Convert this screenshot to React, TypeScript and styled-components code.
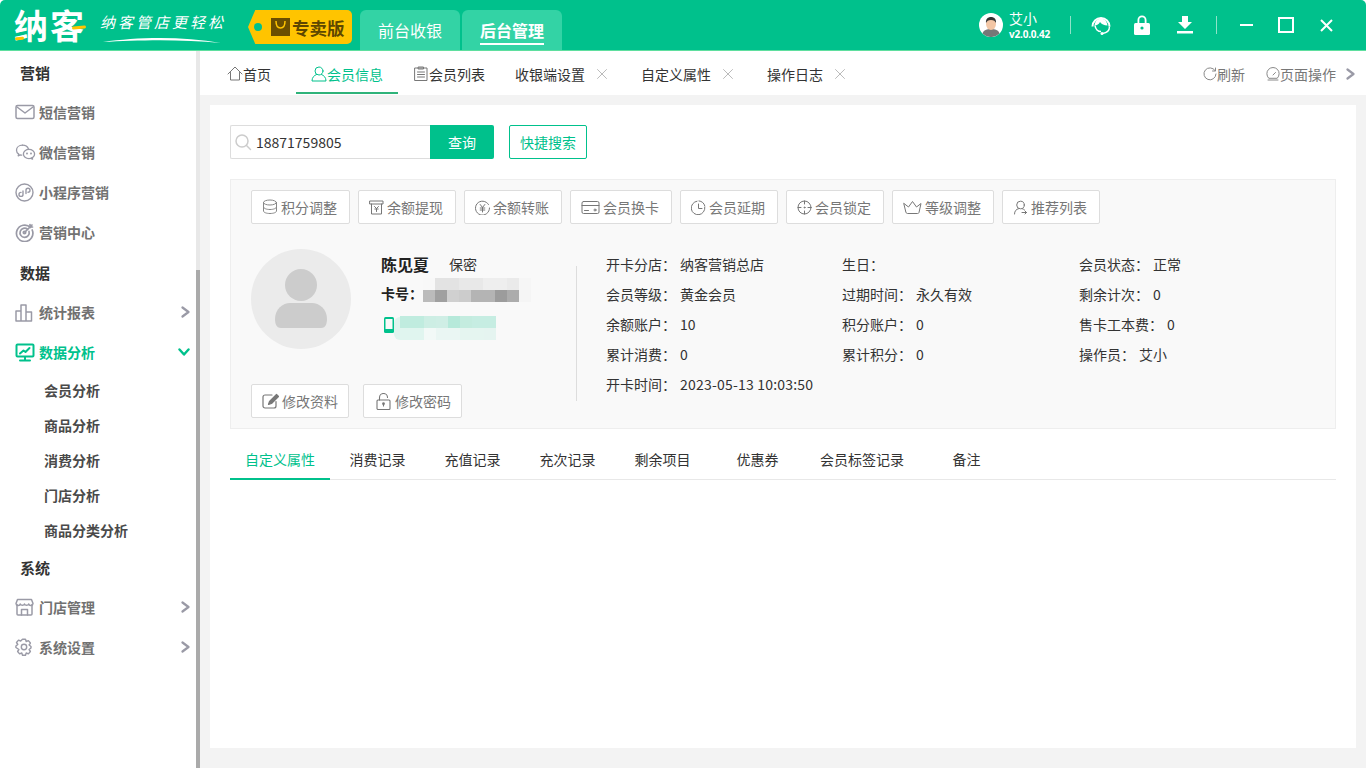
import { ReactNode } from "react";
import styled, { createGlobalStyle } from "styled-components";

const GREEN = "#00c18c";
const FONT = `"Noto Sans CJK SC", "Noto Sans", sans-serif`;

const GlobalStyle = createGlobalStyle`
  html, body, #root { margin: 0; height: 100%; }
  body { font-family: ${FONT}; font-size: 14px; color: #333; background: #fff; overflow: hidden; }
  * { box-sizing: border-box; }
`;

function Ico({ w = 16, h = 16, vb, color = "currentColor", sw = 1, children }: { w?: number; h?: number; vb?: string; color?: string; sw?: number; children: ReactNode }) {
  return (
    <svg width={w} height={h} viewBox={vb || `0 0 ${w} ${h}`} fill="none" stroke={color} strokeWidth={sw} strokeLinecap="round" strokeLinejoin="round" style={{ flex: "none", display: "block" }}>
      {children}
    </svg>
  );
}

const MENU_GREY = "#9a9aa6";

const sideIcons: Record<string, ReactNode> = {
  mail: <Ico w={20} h={16} color={MENU_GREY} sw={1.5}><rect x="1" y="1.5" width="18" height="13" rx="1.5" /><path d="M2 3l8 6 8-6" /></Ico>,
  wechat: <Ico w={21} h={16} color={MENU_GREY} sw={1.3}><path d="M7.5 1.2c-3.5 0-6 2.2-6 5 0 1.6.8 3 2.2 3.9l-.5 1.7 2-1c.5.2 1 .3 1.6.3" /><path d="M13.5 5c-.9-2.3-3.2-3.8-6-3.8" /><ellipse cx="14" cy="10" rx="5.6" ry="4.6" /><path d="M17 13.5l.6 1.6-2-.7" /><circle cx="12" cy="9.5" r=".4" /><circle cx="16" cy="9.5" r=".4" /></Ico>,
  mini: <Ico w={19} h={19} color={MENU_GREY} sw={1.4}><circle cx="9.5" cy="9.5" r="8.5" /><path d="M8 8v3.4a2 2 0 1 1-2-2M11 10.6V7.2a2 2 0 1 1 2 2" /></Ico>,
  target: <Ico w={20} h={20} color={MENU_GREY} sw={1.7}><path d="M15.5 5.5A8.2 8.2 0 1 0 17.2 8" /><path d="M12.5 7.2a4.6 4.6 0 1 0 1.5 2.2" /><circle cx="9.5" cy="10.5" r="1.2" /><path d="M10 10l7-7M15 2.5v2.5h2.5" /></Ico>,
  chart: <Ico w={19} h={19} color={MENU_GREY} sw={1.5}><path d="M1 18V8h5v10M6 18V2h5v16M11 18v-9h5.500v9M1 18h15.500" /></Ico>,
  screen: <Ico w={20} h={19} color={GREEN} sw={2}><rect x="1.500" y="1.500" width="17" height="12" rx="1" /><path d="M10 14v3.500M5 17.500h10" /><path d="M5 10.500l3.500-3 2 1.500 4-4" /></Ico>,
  shop: <Ico w={19} h={18} color={MENU_GREY} sw={1.5}><path d="M2 6.500V16a1 1 0 0 0 1 1h13a1 1 0 0 0 1-1V6.500" /><path d="M2.500 1.500h14l1.500 4a2.200 2.200 0 0 1-4.300.5 2.300 2.300 0 0 1-4.200 0 2.300 2.300 0 0 1-4.200 0A2.200 2.200 0 0 1 1 5.500z" /><path d="M6.500 17v-5.500h6V17" /></Ico>,
  gear: <Ico w={18} h={19} color={MENU_GREY} sw={1.4}><path d="M7.500 1.200h3l.7 2.300 2.200-.9 2 2.400-1.300 2 1.900 1.500v1.500l-1.900 1.500 1.300 2-2 2.400-2.200-.9-.7 2.300h-3l-.7-2.300-2.200.9-2-2.400 1.300-2L.9 9.500V8l1.900-1.500-1.300-2 2-2.400 2.200.9z" /><circle cx="9" cy="9" r="2.700" /></Ico>,
};

const GreyChevron = () => <Ico w={9} h={12} color="#9a9aa6" sw={2.200}><path d="M1.500 1.500L7.500 6l-6 4.500" /></Ico>;

const actionIcons: Record<string, ReactNode> = {
  coin: <Ico w={16} h={16} color="#888"><ellipse cx="8" cy="3.500" rx="6.500" ry="2.500" /><path d="M1.500 3.500v8.500c0 1.400 2.900 2.500 6.500 2.500s6.500-1.100 6.500-2.500V3.500M1.500 8c0 1.400 2.900 2.500 6.500 2.500s6.500-1.100 6.500-2.500" /></Ico>,
  cash: <Ico w={15} h={15} color="#777"><path d="M1 1h13v3H1zM2.500 4v10h10V4" /><path d="M5.500 6.500l2 2 2-2M5.800 9h3.400M7.500 8.500v3" /></Ico>,
  yuan: <Ico w={15} h={15} color="#777"><path d="M13.500 4.500A7 7 0 1 0 14.500 8" /><path d="M5.200 4.500l2.300 3 2.300-3M5.200 8h4.600M5.200 10h4.600M7.500 7.500v4.500" /></Ico>,
  card: <Ico w={19} h={15} color="#777"><rect x="1" y="1.500" width="17" height="12" rx="1.500" /><path d="M1 5.500h17M3.500 10.500h4" /><circle cx="14" cy="10" r="1" /></Ico>,
  clock: <Ico w={15} h={15} color="#777"><path d="M6 1.200A6.800 6.800 0 1 0 13.800 7" /><path d="M8 .9a6.800 6.800 0 0 1 5.800 5M7.500 4v4.500h3.500" /></Ico>,
  lockc: <Ico w={15} h={15} color="#777"><circle cx="7.500" cy="7.500" r="6.500" /><path d="M7.500 1v3M7.500 11v3M1 7.500h3M11 7.500h3" /><circle cx="7.500" cy="7.500" r=".5" /></Ico>,
  crown: <Ico w={19} h={15} color="#777"><path d="M1 3.500l4.500 3.500L9.500 1.500l4 5.500L18 3.500l-2 9a1.500 1.500 0 0 1-1.500 1h-10A1.500 1.500 0 0 1 3 12.500z" /></Ico>,
  refer: <Ico w={15} h={15} color="#777"><circle cx="7.500" cy="5" r="3.800" /><path d="M1.500 14c0-3 1.700-4.800 4-5.300M9.500 8.800c.8.200 1.400.6 2 1.100M9 12.500h4.500M12 11l1.500 1.500L12 14" /></Ico>,
  edit: <Ico w={17} h={16} color="#777" sw={1.200}><path d="M14 8.500V13a2 2 0 0 1-2 2H3a2 2 0 0 1-2-2V4a2 2 0 0 1 2-2h7" /><path d="M6.500 11.500l1-3L14.500 1.500l2 2-7 7z" fill="#777" /></Ico>,
  lock: <Ico w={18} h={17} vb="-2 0 18 17" color="#777" sw={1.100}><rect x="1" y="7" width="13" height="9.500" rx="1" /><path d="M3.500 7V4.500a4 4 0 0 1 8 0" /><path d="M7.500 10.500v2.500" /><circle cx="7.500" cy="10.700" r=".8" fill="#777" /></Ico>,
};

const Shell = styled.div`
  display: flex;
  flex-direction: column;
  height: 100vh;
`;

const Header = styled.header`
  flex: none;
  height: 51px;
  background: ${GREEN};
  border-bottom: 1px solid #5fdf9f;
  border-radius: 5px 5px 0 0;
  display: flex;
  align-items: flex-end;
`;

const Logo = styled.div`
  width: 100px;
  height: 50px;
  padding-left: 14px;
  display: flex;
  align-items: center;
  position: relative;
  font-size: 34px;
  line-height: 1;
  font-weight: 700;
  color: #fff;
  letter-spacing: 2px;
`;

const LogoAccent = styled.span<{ $x: number; $y: number; $w: number }>`
  position: absolute;
  left: ${(p) => p.$x}px;
  top: ${(p) => p.$y}px;
  width: ${(p) => p.$w}px;
  height: 3px;
  border-radius: 2px;
  background: #ffc400;
  transform: rotate(-6deg);
`;

const Slogan = styled.div`
  width: 148px;
  height: 50px;
  padding-top: 12px;
  position: relative;
  color: #fff;
  font-size: 15px;
  line-height: 20px;
  letter-spacing: 3px;
  font-style: italic;
  white-space: nowrap;
`;

const Swoosh = styled.svg`
  position: absolute;
  left: 2px;
  top: 36px;
`;

const VersionTag = styled.div`
  width: 104px;
  height: 34px;
  margin: 0 8px 6px 0;
  align-self: flex-end;
  padding-left: 23px;
  display: flex;
  align-items: center;
  gap: 2px;
  position: relative;
  background: #ffc400;
  border-radius: 5px;
  color: #5d4700;
  font-size: 17.500px;
  font-weight: 700;
  white-space: nowrap;
  clip-path: polygon(0 50%, 7% 0, 100% 0, 100% 100%, 7% 100%);
  &::before {
    content: "";
    position: absolute;
    left: 6px;
    top: 13px;
    width: 8px;
    height: 8px;
    border-radius: 50%;
    background: ${GREEN};
  }
`;

const ModeTab = styled.div<{ $on?: boolean }>`
  width: 100px;
  height: 40px;
  margin-right: 2px;
  background: #33d3a5;
  border-radius: 6px 6px 0 0;
  color: #fff;
  font-size: 16px;
  font-weight: ${(p) => (p.$on ? 700 : 400)};
  display: flex;
  align-items: center;
  justify-content: center;
  span {
    line-height: 24px;
    border-bottom: ${(p) => (p.$on ? "2px solid #fff" : "none")};
    padding-bottom: ${(p) => (p.$on ? "1px" : "0")};
    margin-top: ${(p) => (p.$on ? "3px" : "0")};
  }
`;

const HeaderRight = styled.div`
  margin-left: auto;
  height: 50px;
  display: flex;
  align-items: center;
  color: #fff;
`;

const UserBox = styled.div`
  display: flex;
  align-items: center;
  gap: 6px;
  width: 91px;
`;

const UserName = styled.div`
  font-size: 14px;
  line-height: 18px;
`;

const UserVersion = styled.div`
  font-size: 10px;
  line-height: 14px;
  font-weight: 700;
  letter-spacing: -0.2px;
  font-family: "Noto Sans", sans-serif;
`;

const HeadDivider = styled.div`
  width: 1px;
  height: 18px;
  background: #8fe3c9;
`;

const HeadBtn = styled.div<{ $w: number }>`
  width: ${(p) => p.$w}px;
  display: flex;
  justify-content: center;
`;

const Body = styled.div`
  flex: 1;
  min-height: 0;
  display: flex;
`;

const Sidebar = styled.aside`
  width: 196px;
  flex: none;
  padding-top: 1px;
  background: #fff;
`;

const GroupTitle = styled.div`
  height: 40px;
  padding-left: 20px;
  display: flex;
  align-items: center;
  font-size: 15px;
  font-weight: 700;
  color: #333;
`;

const MenuRow = styled.div<{ $on?: boolean }>`
  height: 40px;
  padding: 0 6px 0 15px;
  display: flex;
  align-items: center;
  font-size: 14px;
  font-weight: 700;
  color: ${(p) => (p.$on ? GREEN : "#717171")};
`;

const MenuIcon = styled.span`
  width: 24px;
  display: flex;
  align-items: center;
`;

const MenuArrow = styled.span`
  margin-left: auto;
  display: flex;
`;

const SubRow = styled.div`
  height: 35px;
  padding-left: 44px;
  display: flex;
  align-items: center;
  font-size: 14px;
  font-weight: 700;
  color: #4a4a4a;
`;

const ScrollTrack = styled.div`
  width: 4px;
  flex: none;
  background: #e8e8e8;
  padding-top: 219px;
`;

const ScrollThumb = styled.div`
  height: 100%;
  background: #aaa;
`;

const Main = styled.main`
  flex: 1;
  min-width: 0;
  display: flex;
  flex-direction: column;
`;

const TabBar = styled.div`
  flex: none;
  height: 44px;
  padding-bottom: 1px;
  display: flex;
  align-items: stretch;
  background: #fff;
`;

const PageTab = styled.div<{ $on?: boolean; $w: number; $pl: number }>`
  width: ${(p) => p.$w}px;
  flex: none;
  padding: 4px 0 0 ${(p) => p.$pl}px;
  display: flex;
  align-items: center;
  white-space: nowrap;
  color: ${(p) => (p.$on ? GREEN : "#333")};
  border-bottom: 2px solid ${(p) => (p.$on ? "#2fb37a" : "transparent")};
`;

const ClosableTab = styled.div<{ $w: number }>`
  width: ${(p) => p.$w}px;
  flex: none;
  padding-top: 3px;
  display: flex;
  align-items: center;
  gap: 12px;
  color: #333;
  white-space: nowrap;
`;

const TabTools = styled.div`
  margin-left: auto;
  padding: 3px 11px 0 0;
  display: flex;
  align-items: center;
  color: #777;
`;

const ToolItem = styled.div`
  display: flex;
  align-items: center;
  margin-right: 21px;
  &:nth-child(2) { margin-right: 10px; }
`;

const Content = styled.div`
  flex: 1;
  min-height: 0;
  background: #f3f3f3;
  padding: 10px 10px 20px;
  display: flex;
`;

const Card = styled.div`
  flex: 1;
  background: #fff;
  padding: 20px 20px 0;
`;

const SearchRow = styled.div`
  display: flex;
  height: 34px;
  margin-bottom: 20px;
`;

const SearchBox = styled.div`
  width: 200px;
  border: 1px solid #ddd;
  border-right: none;
  border-radius: 2px 0 0 2px;
  padding-left: 3px;
  display: flex;
  align-items: center;
  gap: 4px;
  color: #333;
`;

const SearchBtn = styled.div`
  width: 64px;
  background: ${GREEN};
  border-radius: 0 2px 2px 0;
  color: #fff;
  display: flex;
  align-items: center;
  justify-content: center;
`;

const QuickBtn = styled.div`
  margin-left: 15px;
  width: 78px;
  border: 1px solid ${GREEN};
  border-radius: 2px;
  color: ${GREEN};
  display: flex;
  align-items: center;
  justify-content: center;
`;

const Panel = styled.section`
  height: 250px;
  background: #f9f9f9;
  border: 1px solid #eee;
  padding: 10px 20px 0;
`;

const ActionRow = styled.div`
  display: flex;
  gap: 8px;
  height: 34px;
  margin-bottom: 25px;
`;

const ActionBtn = styled.div`
  height: 34px;
  padding: 0 12px 0 10px;
  background: #fff;
  border: 1px solid #ddd;
  border-radius: 2px;
  display: flex;
  align-items: center;
  gap: 3px;
  color: #777;
  white-space: nowrap;
`;

const EditBtn = styled(ActionBtn)`
  padding: 0 10px;
`;

const Profile = styled.div`
  display: flex;
  height: 169px;
`;

const ProfileLeft = styled.div`
  width: 325px;
  flex: none;
  display: flex;
  flex-direction: column;
`;

const ProfileTop = styled.div`
  display: flex;
  gap: 30px;
  height: 135px;
`;

const AvatarCircle = styled.div`
  width: 100px;
  height: 100px;
  border-radius: 50%;
  background: #ebebeb;
  display: flex;
  align-items: center;
  justify-content: center;
`;

const Identity = styled.div`
  padding-top: 3px;
`;

const NameLine = styled.div`
  display: flex;
  align-items: center;
  gap: 20px;
  height: 24px;
  margin-bottom: 3px;
  font-size: 16px;
  font-weight: 700;
  color: #222;
`;

const Gender = styled.span`
  font-size: 14px;
  font-weight: 400;
  color: #333;
`;

const CardLine = styled.div`
  display: flex;
  align-items: center;
  height: 28px;
  font-weight: 700;
  color: #222;
  font-size: 14px;
`;

const PhoneLine = styled.div`
  display: flex;
  align-items: center;
  height: 24px;
  margin-top: 6px;
  padding-left: 3px;
`;

const PhoneBlob = styled.div`
  width: 6px;
  height: 23px;
  background: #dff4ee;
  border-radius: 8px 0 0 8px;
  transform: translateY(3px);
`;

const MosaicBox = styled.div<{ $cols: number; $dy: number }>`
  display: grid;
  grid-template-columns: repeat(${(p) => p.$cols}, 12px);
  grid-auto-rows: 12px;
  filter: blur(0.4px);
  transform: translateY(${(p) => p.$dy}px);
`;

const MosaicCell = styled.div<{ $c: string }>`
  background: ${(p) => p.$c};
`;

const EditRow = styled.div`
  display: flex;
  gap: 14px;
`;

const VDivider = styled.div`
  width: 1px;
  height: 135px;
  margin-top: 17px;
  background: #ddd;
  flex: none;
`;

const InfoGrid = styled.div`
  margin-left: 29px;
  display: grid;
  grid-template-columns: 236px 237px auto;
  grid-auto-rows: 30px;
  align-content: start;
`;

const InfoCell = styled.div`
  display: flex;
  align-items: center;
  gap: 4px;
  color: #333;
  white-space: nowrap;
  font-size: 14px;
`;

const InfoValue = styled.span<{ $wide?: boolean }>`
  letter-spacing: ${(p) => (p.$wide ? "0.2px" : "0")};
`;

const SubTabs = styled.div`
  margin-top: 14px;
  height: 37px;
  display: flex;
  border-bottom: 1px solid #e8e8e8;
`;

const SubTab = styled.div<{ $on?: boolean }>`
  min-width: 95px;
  padding: 0 15px;
  height: 37px;
  padding-bottom: 3px;
  display: flex;
  align-items: center;
  justify-content: center;
  white-space: nowrap;
  color: ${(p) => (p.$on ? GREEN : "#333")};
  border-bottom: 2px solid ${(p) => (p.$on ? GREEN : "transparent")};
`;

function Mosaic({ rows, dy }: { rows: string[][]; dy: number }) {
  return (
    <MosaicBox $cols={rows[0].length} $dy={dy}>
      {rows.flat().map((c, i) => (
        <MosaicCell key={i} $c={c} />
      ))}
    </MosaicBox>
  );
}

const cardMosaic = [
  ["#f8f8f8", "#e3e3e3", "#e3e3e3", "#e8e8e8", "#e8e8e8", "#eeeeee", "#eeeeee", "#eaeaea", "#f6f6f6"],
  ["#bbbbbb", "#a0a0a0", "#d0d0d0", "#cccccc", "#b4b4b4", "#b4b4b4", "#9c9c9c", "#acacac", "#f5f5f5"],
];
const phoneMosaic = [
  ["#c0ecdf", "#c0ecdf", "#cdeee4", "#cfeee5", "#b6e9da", "#c4ecdf", "#c6ede2", "#c6ede2"],
  ["#e0f5ef", "#e0f5ef", "#f2f9f7", "#eaf6f3", "#eaf6f3", "#e5f5f0", "#e5f5f0", "#e5f4f0"],
];

const actions = [
  ["coin", "积分调整"],
  ["cash", "余额提现"],
  ["yuan", "余额转账"],
  ["card", "会员换卡"],
  ["clock", "会员延期"],
  ["lockc", "会员锁定"],
  ["crown", "等级调整"],
  ["refer", "推荐列表"],
];

const info = [
  ["开卡分店", "纳客营销总店"],
  ["生日", ""],
  ["会员状态", "正常"],
  ["会员等级", "黄金会员"],
  ["过期时间", "永久有效"],
  ["剩余计次", "0"],
  ["余额账户", "10"],
  ["积分账户", "0"],
  ["售卡工本费", "0"],
  ["累计消费", "0"],
  ["累计积分", "0"],
  ["操作员", "艾小"],
  ["开卡时间", "2023-05-13 10:03:50"],
];

const subTabs = ["自定义属性", "消费记录", "充值记录", "充次记录", "剩余项目", "优惠券", "会员标签记录", "备注"];

const CloseX = () => <Ico w={10} h={10} color="#bbb"><path d="M.5.5l9 9M9.500.5l-9 9" /></Ico>;

export default function App() {
  return (
    <Shell>
      <GlobalStyle />
      <Header>
        <Logo>
          纳客
          <LogoAccent $x={15} $y={37} $w={9} />
          <LogoAccent $x={72} $y={26} $w={14} />
        </Logo>
        <Slogan>
          纳客管店更轻松
          <Swoosh width="120" height="8" viewBox="0 0 120 8">
            <path d="M1 6C35 1 80 0 119 7C80 3 35 4 1 6z" fill="#fff" />
          </Swoosh>
        </Slogan>
        <VersionTag>
          <svg width="19" height="18" viewBox="0 0 19 18" style={{ flex: "none" }}>
            <rect width="19" height="18" fill="#6b4e00" />
            <path d="M5 3c0 5 2 7 4.500 7S14 8 14 3" fill="none" stroke="#ffc400" strokeWidth="1.500" />
          </svg>
          专卖版
        </VersionTag>
        <ModeTab><span>前台收银</span></ModeTab>
        <ModeTab $on><span>后台管理</span></ModeTab>
        <HeaderRight>
          <UserBox>
            <svg width="24" height="24" viewBox="0 0 24 24" style={{ flex: "none" }}>
              <circle cx="12" cy="12" r="12" fill="#fff" />
              <path d="M3.500 20.500c1-3.500 4.500-4.500 8.500-4.500s7.500 1 8.500 4.500A12 12 0 0 1 3.500 20.500z" fill="#777" />
              <ellipse cx="12" cy="11" rx="5" ry="6" fill="#f3c6a5" />
              <path d="M7 10c-.5-4 2-6 5-6s5.500 2 5 6c-1-2-2-3-5-3s-4 1-5 3z" fill="#333" />
            </svg>
            <div>
              <UserName>艾小</UserName>
              <UserVersion>v2.0.0.42</UserVersion>
            </div>
          </UserBox>
          <HeadDivider />
          <HeadBtn $w={60}>
            <svg width="22" height="22" viewBox="0 0 22 22" fill="none" stroke="#fff">
              <path d="M2.500 12.500A8.500 8.500 0 0 1 19.500 12.500" strokeWidth="2" />
              <path d="M4.500 11.500C5 7 8 4.500 11 4.500S17 7 17.500 11.500C14 11.500 11.500 10 10 8C9 10 7 11.500 4.500 11.500z" fill="#fff" stroke="none" />
              <path d="M5 11.500C5.500 15 8 17.500 11 17.500" strokeWidth="1.600" />
              <path d="M19.500 12.500C19.500 16.500 16.500 19 12.500 19.500" strokeWidth="1.400" />
              <circle cx="12" cy="19.500" r="1.500" fill="#fff" stroke="none" />
            </svg>
          </HeadBtn>
          <HeadBtn $w={22}>
            <svg width="16" height="20" viewBox="0 0 16 20" fill="#fff">
              <path d="M3.500 8V5a4.500 4.500 0 0 1 9 0v3h-1.800V5a2.700 2.700 0 0 0-5.400 0v3z" />
              <rect y="8" width="16" height="12" rx="1.500" />
              <circle cx="8" cy="13" r="1.600" fill={GREEN} />
            </svg>
          </HeadBtn>
          <HeadBtn $w={63}>
            <svg width="16" height="18" viewBox="0 0 16 18" fill="#fff">
              <path d="M5 0h6v6h4l-7 7-7-7h4z" />
              <rect y="15" width="16" height="2.500" />
            </svg>
          </HeadBtn>
          <HeadDivider />
          <HeadBtn $w={59}>
            <svg width="13" height="2" viewBox="0 0 13 2"><rect width="13" height="2" fill="#fff" /></svg>
          </HeadBtn>
          <HeadBtn $w={20}>
            <svg width="16" height="16" viewBox="0 0 16 16" fill="none" stroke="#fff" strokeWidth="2"><rect x="1" y="1" width="14" height="14" /></svg>
          </HeadBtn>
          <HeadBtn $w={60}>
            <svg width="13" height="13" viewBox="0 0 13 13" fill="none" stroke="#fff" strokeWidth="2"><path d="M1 1l11 11M12 1L1 12" /></svg>
          </HeadBtn>
          <HeadBtn $w={10} />
        </HeaderRight>
      </Header>

      <Body>
        <Sidebar>
          <GroupTitle>营销</GroupTitle>
          <MenuRow><MenuIcon>{sideIcons.mail}</MenuIcon>短信营销</MenuRow>
          <MenuRow><MenuIcon>{sideIcons.wechat}</MenuIcon>微信营销</MenuRow>
          <MenuRow><MenuIcon>{sideIcons.mini}</MenuIcon>小程序营销</MenuRow>
          <MenuRow><MenuIcon>{sideIcons.target}</MenuIcon>营销中心</MenuRow>
          <GroupTitle>数据</GroupTitle>
          <MenuRow><MenuIcon>{sideIcons.chart}</MenuIcon>统计报表<MenuArrow><GreyChevron /></MenuArrow></MenuRow>
          <MenuRow $on>
            <MenuIcon>{sideIcons.screen}</MenuIcon>数据分析
            <MenuArrow>
              <Ico w={12} h={9} color={GREEN} sw={2.400}><path d="M1.500 1.500L6 6.500l4.500-5" /></Ico>
            </MenuArrow>
          </MenuRow>
          <SubRow>会员分析</SubRow>
          <SubRow>商品分析</SubRow>
          <SubRow>消费分析</SubRow>
          <SubRow>门店分析</SubRow>
          <SubRow>商品分类分析</SubRow>
          <GroupTitle>系统</GroupTitle>
          <MenuRow><MenuIcon>{sideIcons.shop}</MenuIcon>门店管理<MenuArrow><GreyChevron /></MenuArrow></MenuRow>
          <MenuRow><MenuIcon>{sideIcons.gear}</MenuIcon>系统设置<MenuArrow><GreyChevron /></MenuArrow></MenuRow>
        </Sidebar>
        <ScrollTrack><ScrollThumb /></ScrollTrack>

        <Main>
          <TabBar>
            <PageTab $w={96} $pl={27}>
              <Ico w={16} h={15} color="#777"><path d="M1 8l7-7 7 7M3.500 6.500V14h9V6.500" /></Ico>
              首页
            </PageTab>
            <PageTab $w={102} $pl={15} $on>
              <Ico w={16} h={16} color={GREEN}><circle cx="8" cy="5" r="4" /><path d="M5.500 8.500C3 9.500 1 11.500 1 15h14c0-3.500-2-5.500-4.500-6.500" /></Ico>
              会员信息
            </PageTab>
            <PageTab $w={117} $pl={16}>
              <Ico w={15} h={15} color="#777"><path d="M1 2h12v12.500H1zM4.500 1h5v2h-5zM3.500 6h7M3.500 8.500h7M3.500 11h7" /></Ico>
              会员列表
            </PageTab>
            <ClosableTab $w={126}>收银端设置<CloseX /></ClosableTab>
            <ClosableTab $w={126}>自定义属性<CloseX /></ClosableTab>
            <ClosableTab $w={100}>操作日志<CloseX /></ClosableTab>
            <TabTools>
              <ToolItem>
                <Ico w={14} h={14} color="#888"><path d="M12 3.500A6 6 0 1 0 13 7" /><path d="M12.500 1v3h-3" /></Ico>
                刷新
              </ToolItem>
              <ToolItem>
                <Ico w={14} h={14} color="#888"><path d="M2.500 11a6.200 6.200 0 1 1 9 0zM7 8l2.500-2.500M2 13h10" /></Ico>
                页面操作
              </ToolItem>
              <GreyChevron />
            </TabTools>
          </TabBar>

          <Content>
            <Card>
              <SearchRow>
                <SearchBox>
                  <Ico w={18} h={18} color="#ccc" sw={1.500}><circle cx="8" cy="8" r="6" /><path d="M12.500 12.500L16.500 16.500" /></Ico>
                  18871759805
                </SearchBox>
                <SearchBtn>查询</SearchBtn>
                <QuickBtn>快捷搜索</QuickBtn>
              </SearchRow>

              <Panel>
                <ActionRow>
                  {actions.map(([icon, label]) => (
                    <ActionBtn key={label}>
                      {actionIcons[icon]}
                      {label}
                    </ActionBtn>
                  ))}
                </ActionRow>
                <Profile>
                  <ProfileLeft>
                    <ProfileTop>
                      <AvatarCircle>
                        <svg width="54" height="60" viewBox="0 0 54 60" fill="#ccc">
                          <circle cx="27" cy="16" r="16" />
                          <path d="M1 50c0-10 8-16 15-16h22c7 0 15 6 15 16 0 4-1 9-6 9H7c-5 0-6-5-6-9z" />
                        </svg>
                      </AvatarCircle>
                      <Identity>
                        <NameLine>陈见夏<Gender>保密</Gender></NameLine>
                        <CardLine>
                          卡号：
                          <Mosaic rows={cardMosaic} dy={-3} />
                        </CardLine>
                        <PhoneLine>
                          <svg width="10" height="16" viewBox="0 0 10 16" style={{ flex: "none" }}>
                            <rect width="10" height="16" rx="1.500" fill={GREEN} />
                            <rect x="1.500" y="2" width="7" height="10" fill="#f9f9f9" />
                          </svg>
                          <PhoneBlob />
                          <Mosaic rows={phoneMosaic} dy={3} />
                        </PhoneLine>
                      </Identity>
                    </ProfileTop>
                    <EditRow>
                      <EditBtn>{actionIcons.edit}修改资料</EditBtn>
                      <EditBtn>{actionIcons.lock}修改密码</EditBtn>
                    </EditRow>
                  </ProfileLeft>
                  <VDivider />
                  <InfoGrid>
                    {info.map(([k, v]) => (
                      <InfoCell key={k}>
                        {k}：<InfoValue $wide={v.length > 10}>{v}</InfoValue>
                      </InfoCell>
                    ))}
                  </InfoGrid>
                </Profile>
              </Panel>

              <SubTabs>
                {subTabs.map((t, i) => (
                  <SubTab key={t} $on={i === 0}>{t}</SubTab>
                ))}
              </SubTabs>
            </Card>
          </Content>
        </Main>
      </Body>
    </Shell>
  );
}
